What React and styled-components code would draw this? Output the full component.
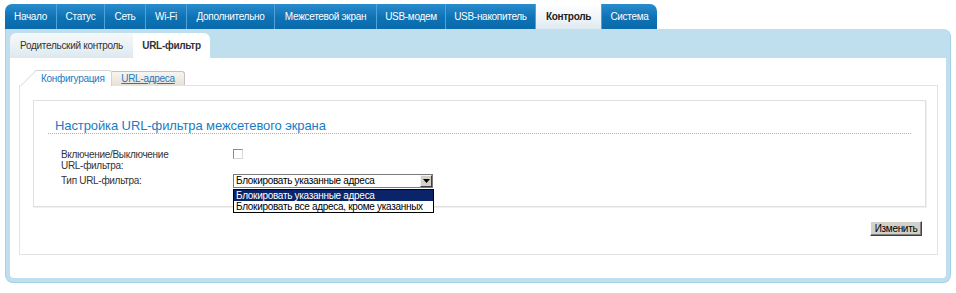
import styled, { createGlobalStyle } from "styled-components";

const GlobalStyle = createGlobalStyle`
  html, body {
    margin: 0;
    padding: 0;
    background: #fff;
  }
  body {
    font-family: "Liberation Sans", Arial, sans-serif;
    font-size: 10px;
    letter-spacing: -0.3px;
    color: #333;
  }
`;

const menu = [
  { title: "Начало", width: 52 },
  { title: "Статус", width: 48 },
  { title: "Сеть", width: 41 },
  { title: "Wi-Fi", width: 41 },
  { title: "Дополнительно", width: 88 },
  { title: "Межсетевой экран", width: 102 },
  { title: "USB-модем", width: 69 },
  { title: "USB-накопитель", width: 90 },
  { title: "Контроль", width: 66, active: true },
  { title: "Система", width: 55 },
];

function App() {
  return (
    <Page>
      <GlobalStyle />
      <MainMenu>
        {menu.map((item) => (
          <MenuTab key={item.title} $width={item.width} $active={item.active}>
            {item.title}
          </MenuTab>
        ))}
      </MainMenu>
      <Frame>
        <SubTabBar>
          <SubTab $width={123}>Родительский контроль</SubTab>
          <SubTab $width={77} $active>URL-фильтр</SubTab>
        </SubTabBar>
        <Panel>
          <InnerTabs>
            <ConfigTab>
              <span>Конфигурация</span>
            </ConfigTab>
            <LinkTab>URL-адреса</LinkTab>
          </InnerTabs>
          <OuterBox>
            <SettingsBox>
              <Heading>Настройка URL-фильтра межсетевого экрана</Heading>
              <Form>
                <Row>
                  <Label>
                    Включение/Выключение
                    <br />
                    URL-фильтра:
                  </Label>
                  <Checkbox />
                </Row>
                <Row>
                  <Label $pad>Тип URL-фильтра:</Label>
                  <SelectWrap>
                    <Select>
                      <SelectText>Блокировать указанные адреса</SelectText>
                      <ArrowButton>
                        <svg width="7" height="4" viewBox="0 0 7 4">
                          <path d="M0 0h7L3.5 4z" fill="#000" />
                        </svg>
                      </ArrowButton>
                    </Select>
                    <OptionList>
                      <Option $selected>Блокировать указанные адреса</Option>
                      <Option>Блокировать все адреса, кроме указанных</Option>
                    </OptionList>
                  </SelectWrap>
                </Row>
              </Form>
            </SettingsBox>
            <Actions>
              <Button>Изменить</Button>
            </Actions>
          </OuterBox>
        </Panel>
      </Frame>
    </Page>
  );
}

export default App;

const Page = styled.div`
  width: 956px;
  height: 293px;
  padding: 4px 0 0 5px;
  box-sizing: border-box;
`;

const MainMenu = styled.div`
  display: flex;
  height: 25px;
`;

const MenuTab = styled.div`
  width: ${(p) => p.$width}px;
  height: 25px;
  box-sizing: border-box;
  display: flex;
  align-items: center;
  justify-content: center;
  border-right: 1px solid #4fa3da;
  color: ${(p) => (p.$active ? "#222" : "#fff")};
  font-weight: ${(p) => (p.$active ? "bold" : "normal")};
  background: ${(p) =>
    p.$active
      ? "linear-gradient(#ffffff, #eef4f8 60%, #dfe9f0)"
      : "linear-gradient(#2a8ccd, #0d72b4 55%, #0a6aab)"};

  &:first-child {
    border-top-left-radius: 7px;
  }
  &:last-child {
    border-top-right-radius: 7px;
    border-right: none;
  }
`;

const Frame = styled.div`
  width: 946px;
  box-sizing: border-box;
  border: 1px solid #a7d0e7;
  border-top: none;
  border-radius: 0 8px 8px 8px;
  background: #bfdeee;
  padding: 0 4px 4px 4px;
`;

const SubTabBar = styled.div`
  display: flex;
  height: 29px;
  padding-top: 4px;
  box-sizing: border-box;
`;

const SubTab = styled.div`
  width: ${(p) => p.$width}px;
  height: 25px;
  display: flex;
  align-items: center;
  justify-content: center;
  color: #333;
  font-weight: ${(p) => (p.$active ? "bold" : "normal")};
  background: ${(p) =>
    p.$active ? "#fff" : "linear-gradient(#f6f9fb, #e8f0f5 60%, #dde8ef)"};
  border-radius: ${(p) => (p.$active ? "0 6px 0 0" : "6px 0 0 0")};
`;

const Panel = styled.div`
  height: 220px;
  box-sizing: border-box;
  background: #fff;
  border-radius: 0 0 4px 4px;
  padding: 12px 8px 0 9px;
`;

const InnerTabs = styled.div`
  position: relative;
  z-index: 1;
  display: flex;
  align-items: flex-end;
  height: 16px;
  margin: 0 0 -1px 1px;
`;

const ConfigTab = styled.div`
  position: relative;
  isolation: isolate;
  width: 92px;
  height: 16px;
  box-sizing: border-box;
  padding: 0 0 0 21px;
  display: flex;
  align-items: center;
  color: #1d7bc2;

  &::before {
    content: "";
    position: absolute;
    left: 0;
    bottom: 0;
    width: 24px;
    height: 16px;
    box-sizing: border-box;
    background: #fff;
    border-left: 1px solid #d4d4d4;
    border-top: 1px solid #d4d4d4;
    transform-origin: bottom left;
    transform: skewX(-45deg);
    z-index: -1;
  }
  &::after {
    content: "";
    position: absolute;
    left: 16px;
    right: 0;
    top: 0;
    bottom: 0;
    background: #fff;
    border-top: 1px solid #d4d4d4;
    border-right: 1px solid #d4d4d4;
    border-top-right-radius: 3px;
    z-index: -1;
  }
`;

const LinkTab = styled.div`
  width: 73px;
  height: 14px;
  box-sizing: border-box;
  display: flex;
  align-items: center;
  justify-content: center;
  margin-bottom: 1px;
  color: #1d7bc2;
  text-decoration: underline;
  background: linear-gradient(#f7f5f0, #e6e2d8);
  border: 1px solid #c8c3b6;
  border-left: none;
  border-bottom: none;
  border-top-right-radius: 3px;
`;

const OuterBox = styled.div`
  height: 170px;
  box-sizing: border-box;
  border: 1px solid #e3e3e3;
  padding: 14px 11px 0 13px;
  display: flex;
  flex-direction: column;
`;

const SettingsBox = styled.div`
  height: 107px;
  box-sizing: border-box;
  border: 1px solid #e0e0e0;
  box-shadow: 1px 1px 0 #f0f0f0;
  padding: 17px 14px 0 14px;
`;

const Heading = styled.div`
  font-size: 13px;
  line-height: 15px;
  letter-spacing: -0.1px;
  color: #1a7cc2;
  padding-left: 7px;
  border-bottom: 1px dotted #7fbde3;
`;

const Form = styled.div`
  display: flex;
  flex-direction: column;
  gap: 3px;
  padding: 15px 0 0 13px;
`;

const Row = styled.div`
  display: flex;
  align-items: flex-start;
`;

const Label = styled.div`
  width: 172px;
  line-height: 11px;
  padding-top: ${(p) => (p.$pad ? "1px" : "0")};
  color: #333;
`;

const Checkbox = styled.span`
  width: 10px;
  height: 10px;
  box-sizing: border-box;
  border: 1px solid;
  border-color: #8c8c8c #d8d8d8 #d8d8d8 #8c8c8c;
  background: #fff;
`;

const SelectWrap = styled.div`
  position: relative;
`;

const Select = styled.div`
  width: 200px;
  height: 14px;
  box-sizing: border-box;
  border: 1px solid #7b7b7b;
  display: flex;
  align-items: center;
  justify-content: space-between;
  background: #fff;
  color: #000;
  padding-left: 2px;
`;

const SelectText = styled.span`
  line-height: 12px;
`;

const ArrowButton = styled.span`
  width: 12px;
  height: 12px;
  box-sizing: border-box;
  display: flex;
  align-items: center;
  justify-content: center;
  background: #d4d0c8;
  border: 1px solid;
  border-color: #f4f4f4 #404040 #404040 #f4f4f4;
`;

const OptionList = styled.div`
  position: absolute;
  top: 15px;
  left: 0;
  width: 201px;
  box-sizing: border-box;
  border: 1px solid #000;
  background: #fff;
  z-index: 2;
`;

const Option = styled.div`
  height: 11px;
  line-height: 11px;
  padding-left: 2px;
  color: ${(p) => (p.$selected ? "#fff" : "#000")};
  background: ${(p) => (p.$selected ? "#0a246a" : "#fff")};
`;

const Actions = styled.div`
  display: flex;
  justify-content: flex-end;
  padding: 14px 4px 0 0;
`;

const Button = styled.button`
  width: 52px;
  height: 15px;
  padding: 0;
  font-family: "Liberation Sans", Arial, sans-serif;
  font-size: 10px;
  letter-spacing: -0.3px;
  color: #000;
  background: #d4d0c8;
  border: 1px solid;
  border-color: #fff #404040 #404040 #fff;
  box-shadow: inset -1px -1px 0 #808080;
`;
